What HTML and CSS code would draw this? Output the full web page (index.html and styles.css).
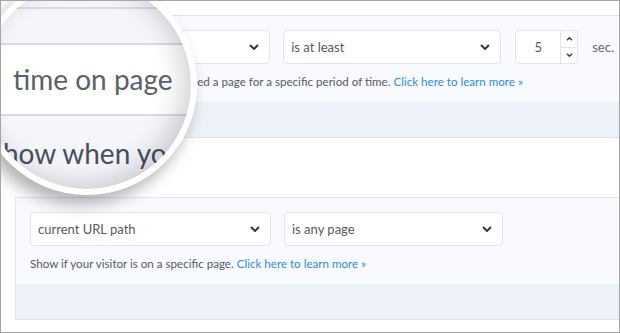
FILE: index.html
```html
<!DOCTYPE html>
<html lang="en">
<head>
    <meta charset="UTF-8">
    <meta name="viewport" content="width=device-width, initial-scale=1.0">
    <title>Display Rules</title>
    <link rel="stylesheet" href="styles.css">
</head>
<body>
    <div class="frame">
        <div class="panel">
            <div class="panel-body">
                <div class="row">
                    <div class="select select-field">
                        <span>time on page</span>
                        <svg class="chevron" width="10" height="6" viewBox="0 0 10 6"><path d="M1 1 L5 5 L9 1"/></svg>
                    </div>
                    <div class="select select-op">
                        <span>is at least</span>
                        <svg class="chevron" width="10" height="6" viewBox="0 0 10 6"><path d="M1 1 L5 5 L9 1"/></svg>
                    </div>
                    <div class="number">
                        <span class="number-value">5</span>
                        <div class="spin">
                            <span class="spin-btn"><svg width="7" height="4" viewBox="0 0 7 4"><path d="M1 3.2 L3.5 0.8 L6 3.2"/></svg></span>
                            <span class="spin-btn"><svg width="7" height="4" viewBox="0 0 7 4"><path d="M1 0.8 L3.5 3.2 L6 0.8"/></svg></span>
                        </div>
                    </div>
                    <span class="unit">sec.</span>
                </div>
                <p class="help">Show when your visitor has opened a page for a specific period of time. <a href="#">Click here to learn more &raquo;</a></p>
            </div>
            <div class="panel-footer"></div>
        </div>

        <div class="panel panel-spaced">
            <div class="panel-body">
                <div class="row">
                    <div class="select select-field">
                        <span>current URL path</span>
                        <svg class="chevron" width="10" height="6" viewBox="0 0 10 6"><path d="M1 1 L5 5 L9 1"/></svg>
                    </div>
                    <div class="select select-op">
                        <span>is any page</span>
                        <svg class="chevron" width="10" height="6" viewBox="0 0 10 6"><path d="M1 1 L5 5 L9 1"/></svg>
                    </div>
                </div>
                <p class="help">Show if your visitor is on a specific page. <a href="#">Click here to learn more &raquo;</a></p>
            </div>
            <div class="panel-footer"></div>
        </div>

        <!-- magnifying glass over the first rule -->
        <div class="magnifier">
            <div class="mag-band"></div>
            <div class="mag-gap"></div>
            <div class="mag-field">time on page</div>
            <div class="mag-heading">Show when you</div>
        </div>
    </div>
</body>
</html>
```

FILE: styles.css
```css
* {
    margin: 0;
    padding: 0;
    box-sizing: border-box;
}

body {
    font-family: Lato, 'Open Sans', sans-serif;
    background: #fff;
}

.frame {
    position: relative;
    width: 620px;
    height: 333px;
    border: 1px solid #a6a6a6;
    padding: 14px 0 0 14px;
    overflow: hidden;
    background: #fff;
}

.panel {
    border: 1px solid #dfe5f0;
    margin-right: -10px;
}

.panel-spaced {
    margin-top: 59px;
}

.panel-body {
    background: #f8fafe;
    padding: 14px 14px 12px;
}

.panel-footer {
    height: 35px;
    background: #edf1f9;
}

.row {
    display: flex;
    align-items: center;
}

.select {
    height: 34px;
    border: 1px solid #dfe5ef;
    border-radius: 4px;
    background: #fff;
    display: flex;
    align-items: center;
    justify-content: space-between;
    padding: 0 10px 0 7px;
    font-size: 13px;
    color: #555a62;
}

.select-field {
    width: 241px;
    margin-right: 13px;
}

.select-op {
    width: 219px;
    margin-right: 14px;
}

.chevron path {
    fill: none;
    stroke: #34373e;
    stroke-width: 2;
}

.number {
    width: 63px;
    height: 34px;
    border: 1px solid #dfe5ef;
    border-radius: 4px;
    background: #fff;
    display: flex;
}

.number-value {
    flex: 1;
    text-align: center;
    line-height: 32px;
    font-size: 13px;
    color: #555a62;
}

.spin {
    width: 17px;
    border-left: 1px solid #dfe5ef;
    display: flex;
    flex-direction: column;
}

.spin-btn {
    flex: 1;
    display: flex;
    align-items: center;
    justify-content: center;
}

.spin-btn + .spin-btn {
    border-top: 1px solid #dfe5ef;
}

.spin-btn path {
    fill: none;
    stroke: #3a3d44;
    stroke-width: 1.5;
}

.unit {
    margin-left: 14px;
    font-size: 13px;
    color: #666a72;
}

.help {
    margin-top: 10px;
    font-size: 11.6px;
    line-height: 16px;
    color: #555a62;
    white-space: nowrap;
}

.help a {
    color: #2f8be0;
    text-decoration: none;
}

.magnifier {
    position: absolute;
    left: -18px;
    top: -20px;
    width: 208px;
    height: 208px;
    border-radius: 50%;
    overflow: hidden;
    background: #f4f6fb;
    box-shadow: 0 0 0 6px #fff, -6px 9px 16px 6px rgba(0, 0, 0, 0.3);
    color: #5b606b;
    font-size: 28px;
}

.magnifier::after {
    content: "";
    position: absolute;
    inset: 0;
    border-radius: 50%;
    box-shadow: inset -8px -4px 26px rgba(0, 0, 0, 0.18);
}

.mag-band {
    height: 28px;
    border-bottom: 2px solid #d4dcea;
}

.mag-gap {
    height: 36px;
    border-bottom: 2px solid #d4dcea;
}

.mag-field {
    height: 71px;
    line-height: 69px;
    padding-left: 30px;
    background: #fff;
    border-bottom: 2px solid #d4dcea;
}

.mag-heading {
    padding: 17px 0 0 5px;
    line-height: 40px;
    color: #4a4f5b;
    white-space: nowrap;
}
```
